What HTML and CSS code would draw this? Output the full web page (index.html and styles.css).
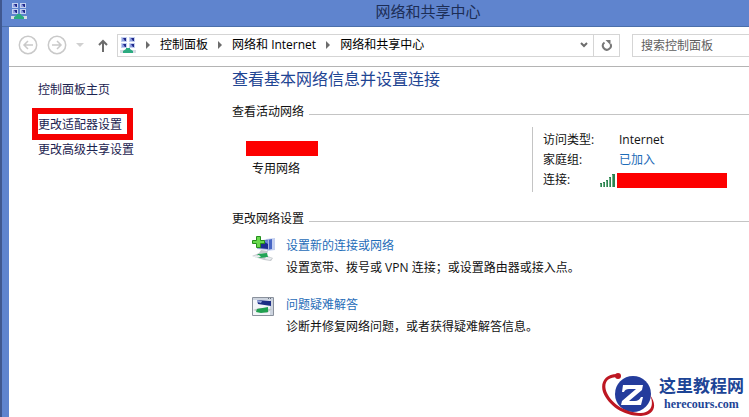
FILE: index.html
```html
<!DOCTYPE html>
<html lang="zh-CN">
<head>
<meta charset="utf-8">
<title>网络和共享中心</title>
<link rel="stylesheet" href="styles.css">
</head>
<body>
<svg class="defs" aria-hidden="true">
  <symbol id="net" viewBox="0 0 16 18">
    <path fill="#c3d0f0" d="M1 1h6v5H1zM9 1h6v5H9zM1 7h6v5H1zM9 7h6v5H9z"/>
    <path fill="#20288a" d="M2 2h4v3H2zM10 2h4v3h-4zM2 8h4v3H2zM10 8h4v3h-4z"/>
    <path fill="#8f9fdf" d="M2 2h1l2 3H2zM10 2h1l2 3h-3zM2 8h1l2 3H2zM10 8h1l2 3h-3z"/>
    <path fill="#d5dce4" d="M0 14h16v3H0z"/>
    <path fill="#2cab80" d="M6 12h4v1l3 2v2H3v-2l3-2z"/>
  </symbol>
</svg>
<div class="window">
  <header class="titlebar">
    <svg class="net-icon"><use href="#net"/></svg>
    <h1>网络和共享中心</h1>
  </header>
  <div class="client">
    <nav class="toolbar">
      <button class="round" aria-label="后退"><svg width="20" height="20" viewBox="0 0 20 20"><circle cx="10" cy="10" r="8.7"/><path d="M15 10H6M10 6l-4 4 4 4"/></svg></button>
      <button class="round" aria-label="前进"><svg width="20" height="20" viewBox="0 0 20 20"><circle cx="10" cy="10" r="8.7"/><path d="M5 10h9M10 6l4 4-4 4"/></svg></button>
      <button class="recent" aria-label="最近"><svg width="8" height="4" viewBox="0 0 8 4"><path d="M0 0h8L4 4z"/></svg></button>
      <button class="up" aria-label="上移"><svg width="10" height="13" viewBox="0 0 10 13"><path d="M5 13V2M1 6l4-4 4 4"/></svg></button>
      <div class="address">
        <svg class="net-icon"><use href="#net"/></svg>
        <svg class="chev" viewBox="0 0 4 8"><path d="M0 0l4 4-4 4z"/></svg>
        <a href="#">控制面板</a>
        <svg class="chev" viewBox="0 0 4 8"><path d="M0 0l4 4-4 4z"/></svg>
        <a href="#">网络和 Internet</a>
        <svg class="chev" viewBox="0 0 4 8"><path d="M0 0l4 4-4 4z"/></svg>
        <a href="#">网络和共享中心</a>
        <button class="drop" aria-label="展开"><svg width="8" height="6" viewBox="0 0 8 6"><path d="M1 1l3 3 3-3"/></svg></button>
        <button class="refresh" aria-label="刷新"><svg width="12" height="13" viewBox="0 0 12 13"><path d="M3.500 3.500A4 4 0 1 0 9.500 5"/><path class="tip" d="M4.500 1h5v5z"/></svg></button>
      </div>
      <input class="search" type="search" aria-label="搜索控制面板" placeholder="搜索控制面板">
    </nav>
    <div class="content">
      <aside class="side">
        <a href="#">控制面板主页</a>
        <a href="#" class="marked">更改适配器设置</a>
        <a href="#">更改高级共享设置</a>
      </aside>
      <main>
        <h2>查看基本网络信息并设置连接</h2>
        <h3>查看活动网络</h3>
        <section class="active">
          <div class="network">
            <span class="redact name"></span>
            <span class="kind">专用网络</span>
          </div>
          <dl>
            <dt>访问类型:</dt><dd>Internet</dd>
            <dt>家庭组:</dt><dd><a href="#">已加入</a></dd>
            <dt>连接:</dt>
            <dd class="link"><svg width="15" height="13" viewBox="0 0 15 13"><path fill="#2f8052" d="M0 9h2v4H0zM3 8h2v5H3zM6 6h2v7H6zM9 3h2v10H9zM12 0h3v13h-3z"/><path fill="#6bb585" d="M0 10h1v3H0zM3 9h1v4H3zM6 7h1v6H6zM9 4h1v9H9zM12 1h1v12h-1z"/></svg><span class="redact ssid"></span></dd>
          </dl>
        </section>
        <h3>更改网络设置</h3>
        <ul class="tasks">
          <li>
            <svg width="24" height="26" viewBox="0 0 24 26">
              <path fill="#c3cff0" d="M14 3l9-1v12l-8 1z"/><path fill="#4665c4" d="M15 4l5-1v10l-5 1z"/>
              <path fill="#a9b7df" d="M5 5l12-2v11L5 13z"/><path fill="#1c2c91" d="M6 6l10-2v9L6 12z"/><path fill="#6d86dc" d="M11 5l5-1v4z"/>
              <path fill="#c5c9cd" d="M9 14l7 1-1 3-8-1zM0 20l7-3 14 5-2 3-7-1z"/><path fill="#22a456" d="M6 18l9-1 1 4-8 1-4-1z"/><path fill="#e9edef" d="M1 20l6-1 2 2-5 1zM14 21l6 1-2 2-5-1z"/>
              <path fill="#69d94c" stroke="#248e1d" d="M4.500.5h4v4h4v3h-4v4h-4v-4h-4v-3h4z"/>
            </svg>
            <div><a href="#">设置新的连接或网络</a><p>设置宽带、拨号或 VPN 连接；或设置路由器或接入点。</p></div>
          </li>
          <li>
            <svg width="24" height="26" viewBox="0 0 24 26">
              <path fill="#f3f5f8" stroke="#8a919c" d="M.5 2.500h21v18H.5z"/><path fill="#cdd4df" d="M1 3h20v2H1zM18 5h3v15h-3z"/>
              <path fill="#1d2e85" d="M5 5l14 1v5l-13-2z"/><path fill="#98a8da" d="M5 5l5 1-1 2-4-1z"/>
              <path fill="#bec7c6" d="M1 15l6-2 13 1-5 4-8-1z"/><path fill="#20a04f" d="M5 14l11-2v5l-7 1-5-1z"/><path fill="#66707e" d="M16 3h1v1h-1zM18 3h1v1h-1z"/>
            </svg>
            <div><a href="#">问题疑难解答</a><p>诊断并修复网络问题，或者获得疑难解答信息。</p></div>
          </li>
        </ul>
      </main>
    </div>
    <footer class="brand">
      <svg width="58" height="46" viewBox="0 0 58 46">
        <circle cx="32" cy="23" r="18" fill="#243c9c"/>
        <path fill="#fff" d="M22 14h20l-1 5-13 11h6q4 0 6-4h2l-2 8H20l1-4 14-12h-7q-4 0-5 3h-2z"/>
        <path fill="#bd1722" d="M16 3C4 3-1 12 2 21c5 13 20 24 38 24 13-1 17-10 9-21 4 9 2 17-9 18C25 42 11 33 6 22 2 13 5 6 17 6z"/>
        <circle cx="17" cy="5" r="3" fill="#bd1722"/>
      </svg>
      <div><strong>这里教程网</strong><span>herecours.com</span></div>
    </footer>
  </div>
</div>
</body>
</html>
```

FILE: styles.css
```css
* { box-sizing: border-box; margin: 0; padding: 0; }
body {
  font: 12px/20px "Open Sans", "Noto Sans CJK SC", sans-serif;
  color: #111;
  background: #fff;
}
a { color: #1e6cb8; text-decoration: none; }
button { border: 0; background: none; display: flex; align-items: center; justify-content: center; }
svg { flex: none; }
.defs { position: absolute; width: 0; height: 0; }

.window {
  min-height: 100vh;
  display: flex;
  flex-direction: column;
  background: #5f84ce;
  border-left: 2px solid #40588f;
}
.titlebar {
  height: 27px;
  display: flex;
  align-items: center;
  padding: 0 0 4px 9px;
  border-bottom: 1px solid #4a6faa;
}
.titlebar h1 {
  flex: 1;
  text-align: center;
  font-size: 15px;
  font-weight: 400;
  color: #1c2d55;
  padding-right: 80px;
  padding-left: 160px;
}
.net-icon { width: 16px; height: 18px; }
.client {
  flex: 1;
  display: flex;
  flex-direction: column;
  margin-left: 7px;
  background: #fff;
}

.toolbar {
  height: 40px;
  display: flex;
  align-items: center;
  padding: 1px 0 4px 9px;
  border-bottom: 1px solid #b4b4b4;
}
.round { margin-right: 9px; }
.round svg { fill: none; stroke: #c9c9c9; stroke-width: 1.5; }
.recent { margin-right: 14px; }
.recent svg { fill: #d0d0d0; }
.up { margin-right: 9px; }
.up svg { fill: none; stroke: #6c6c6c; stroke-width: 2; }
.address {
  flex: 1;
  height: 23px;
  display: flex;
  align-items: center;
  padding-left: 2px;
  border: 1px solid #d5d5d5;
}
.address a { color: #000; }
.chev { width: 4px; height: 8px; margin: 0 10px; fill: #6c6c6c; }
.drop { margin-left: auto; width: 18px; }
.drop svg { fill: none; stroke: #6c6c6c; stroke-width: 2; }
.refresh { width: 26px; height: 100%; border-left: 1px solid #d5d5d5; }
.refresh svg { fill: none; stroke: #777; stroke-width: 2; }
.refresh .tip { fill: #777; stroke: none; }
.search {
  width: 117px;
  height: 23px;
  margin-left: 12px;
  padding-left: 8px;
  border: 1px solid #d5d5d5;
  border-right: 0;
  border-radius: 0;
  font: inherit;
  appearance: none;
}
.search::placeholder { color: #5e5e5e; }

.content { flex: 1; display: flex; }
.side {
  width: 223px;
  padding: 13px 0 0 23px;
  display: flex;
  flex-direction: column;
  align-items: flex-start;
}
.side a { color: #1c2350; padding-left: 6px; }
.side .marked {
  margin-top: 8px;
  border: 6px solid #f50000;
  padding: 1px 5px 0 0;
  line-height: 19px;
}
main { flex: 1; }
h2 { font-size: 16px; line-height: 24px; font-weight: 400; color: #1f4593; }
h3 {
  display: flex;
  align-items: center;
  gap: 5px;
  font-size: 12px;
  font-weight: 400;
}
h3::after { content: ""; flex: 1; height: 1px; margin-top: 4px; background: #c4c4c4; }
h2 + h3 { margin-top: 11px; }
.active { display: flex; margin: 5px 0 17px; }
.network { width: 300px; padding: 14px 0 0 14px; }
.redact { display: block; height: 15px; background: #fd0000; }
.name { width: 72px; }
.kind { display: block; padding: 3px 0 0 6px; }
dl {
  display: grid;
  grid-template-columns: 57px auto;
  border-left: 1px solid #c4c4c4;
  padding: 3px 0 2px 10px;
}
dd { padding-left: 19px; }
.link { display: flex; align-items: center; gap: 2px; padding-left: 0; }
.ssid { width: 110px; }
.tasks { list-style: none; padding: 7px 0 0 20px; }
.tasks li { display: flex; gap: 10px; margin-bottom: 15px; }
.tasks p { line-height: 24px; }
.brand {
  position: absolute;
  right: 5px;
  bottom: 0;
  display: flex;
  align-items: center;
  gap: 0;
}
.brand div { display: flex; flex-direction: column; align-items: center; color: #1d4596; }
.brand strong { font-size: 17px; line-height: 20px; font-weight: 700; }
.brand span { font: bold 12px/16px "Liberation Serif", serif; }
```
